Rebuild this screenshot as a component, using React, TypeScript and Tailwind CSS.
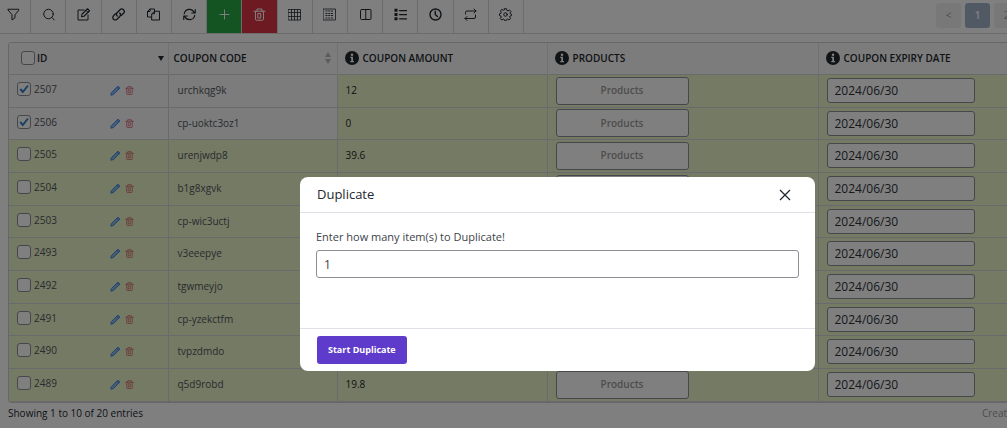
import React from "react";

type Coupon = { id: number; code: string; amount: string; selected?: boolean };

const coupons: Coupon[] = [
  { id: 2507, code: "urchkqg9k", amount: "12", selected: true },
  { id: 2506, code: "cp-uoktc3oz1", amount: "0", selected: true },
  { id: 2505, code: "urenjwdp8", amount: "39.6" },
  { id: 2504, code: "b1g8xgvk", amount: "" },
  { id: 2503, code: "cp-wic3uctj", amount: "" },
  { id: 2493, code: "v3eeepye", amount: "" },
  { id: 2492, code: "tgwmeyjo", amount: "" },
  { id: 2491, code: "cp-yzekctfm", amount: "" },
  { id: 2490, code: "tvpzdmdo", amount: "" },
  { id: 2489, code: "q5d9robd", amount: "19.8" },
];

function Glyph({ children, size = "size-[13px]" }: { children: React.ReactNode; size?: string }) {
  return (
    <svg
      viewBox="0 0 26 26"
      className={`${size} shrink-0`}
      fill="none"
      stroke="currentColor"
      strokeWidth="2"
      strokeLinejoin="round"
      strokeLinecap="round"
      aria-hidden="true"
    >
      {children}
    </svg>
  );
}

const trashPaths = (
  <>
    <path d="M2 6.500h22M8 6V2h10v4M5 7v15.500a2 2 0 0 0 2 2h12a2 2 0 0 0 2-2V7" />
    <path d="M10.500 11h5v9h-5z" />
  </>
);

const tools: { label: string; tone?: string; icon: React.ReactNode }[] = [
  { label: "Filter", icon: <path d="M2.500 2.500h21v2L16 13.500v6L10 24V13.500L2.500 4.500z" /> },
  {
    label: "Search",
    icon: (
      <>
        <circle cx="13" cy="12" r="9.500" />
        <path d="M20 19l4.500 5" />
      </>
    ),
  },
  {
    label: "Edit",
    icon: (
      <>
        <path d="M14 4H2v20h20V14" />
        <path d="M9 17.500l1-5L21 1.500l4 4L14 16.500z" strokeWidth="2.200" />
        <path d="M18 4.500l4 4" />
      </>
    ),
  },
  {
    label: "Link",
    icon: (
      <>
        <path d="M10.500 16a5 5 0 0 1 0-7l5.500-5.500a4.900 4.900 0 0 1 7 7l-4 4" strokeWidth="2.500" />
        <path d="M15.500 10a5 5 0 0 1 0 7L10 22.500a4.900 4.900 0 0 1-7-7l4-4" strokeWidth="2.500" />
      </>
    ),
  },
  {
    label: "Duplicate",
    icon: (
      <>
        <path d="M9 18H1V7l5-5h9v4" />
        <path d="M6 2v5H1" />
        <path d="M10 11.500L15 6.500h10V24H10z" />
        <path d="M15 6.500v5h-5" />
      </>
    ),
  },
  {
    label: "Refresh",
    icon: (
      <>
        <path d="M2.500 11.500A10.500 10.500 0 0 1 22.500 9M24.500 3v7h-7" strokeWidth="2.300" />
        <path d="M23.500 14.500A10.500 10.500 0 0 1 3.500 17M1.500 23v-7h7" strokeWidth="2.300" />
      </>
    ),
  },
  { label: "Add", tone: "bg-[#28a745] text-white", icon: <path d="M13 4v18M4 13h18" /> },
  { label: "Delete", tone: "bg-[#dc3545] text-white", icon: trashPaths },
  {
    label: "Table",
    icon: (
      <path
        strokeLinejoin="miter"
        strokeWidth="1.600"
        d="M1 3h24v21H1zM1 9h24M1 17h24M7 3v21M13 3v21M19 3v21"
      />
    ),
  },
  {
    label: "Rows",
    icon: (
      <>
        <path strokeLinejoin="miter" strokeWidth="1.600" d="M1 2h24v22H1z" />
        <path
          d="M5 6h16M5 11h16M5 15h16M5 20h16"
          strokeWidth="1.800"
          strokeDasharray="4 1.500"
          strokeLinecap="butt"
        />
      </>
    ),
  },
  {
    label: "Columns",
    icon: (
      <>
        <rect x="3" y="3" width="21" height="20" rx="2" />
        <path d="M13.500 3v20" />
      </>
    ),
  },
  {
    label: "List",
    icon: (
      <>
        <path d="M1 1.500h6v6H1zM1 10h6v6H1zM1 18.500h6v6H1z" fill="currentColor" stroke="none" />
        <path d="M11 5h14M11 13h14M11 21.500h14" strokeWidth="2.500" />
      </>
    ),
  },
  {
    label: "History",
    icon: (
      <>
        <circle cx="13" cy="13" r="11" strokeWidth="2.800" />
        <path d="M12.500 6.500V13l4.500 4" strokeWidth="2.800" />
      </>
    ),
  },
  {
    label: "Repeat",
    icon: (
      <>
        <path d="M3 12V9a3 3 0 0 1 3-3h18M20 2l4 4-4 4" />
        <path d="M23 14v4a3 3 0 0 1-3 3H2M6 17l-4 4 4 4" />
      </>
    ),
  },
  {
    label: "Settings",
    icon: (
      <>
        <path d="M11 1.500h4l.8 3.300 2.200 1 3-1.800 2.900 2.900-1.800 3 1 2.200 2.400.8v1.300l-.1 1-3.100.7-1 2.200 1.800 3-2.900 2.900-3-1.800-2.200 1-.8 2.300h-2.500l-.9-2.300-2.200-1-3 1.800L2.700 21l1.800-3-1-2.200-2.500-.8v-3.500l2.500-.7 1-2.200-1.800-3L5.600 2.800l3 1.800 1.700-.800z" />
        <circle cx="13" cy="13" r="3.500" />
      </>
    ),
  },
];

function Tick({ label, checked = false }: { label: string; checked?: boolean }) {
  return (
    <span className="grid size-[14px] shrink-0 place-items-center">
      <input
        type="checkbox"
        aria-label={label}
        defaultChecked={checked}
        className="peer col-start-1 row-start-1 size-[14px] appearance-none rounded-[3px] border border-[#8c8f94] bg-white"
      />
      <svg
        viewBox="0 0 12 12"
        className="pointer-events-none invisible col-start-1 row-start-1 size-3 peer-checked:visible"
        fill="none"
        stroke="#3582c4"
        strokeWidth="2"
        aria-hidden="true"
      >
        <path d="M2.200 6l2.600 3L10 2.500" />
      </svg>
    </span>
  );
}

function Info() {
  return (
    <svg viewBox="0 0 28 28" className="size-[14px] shrink-0" aria-hidden="true">
      <circle cx="14" cy="14" r="14" fill="#23282d" />
      <circle cx="14" cy="7.500" r="2.500" fill="#fff" />
      <path d="M10.500 11.500H16V20h2v2.500h-7.500V20h2v-6h-2z" fill="#fff" />
    </svg>
  );
}

function CouponRow({ coupon }: { coupon: Coupon }) {
  const lead = coupon.selected ? "bg-[#f8f8f8]" : "";
  return (
    <tr className="h-[33px] border-b border-[#d3d4d8] bg-[#eaf4c8] [&:nth-child(3n+2)]:h-8">
      <td className={`border-r border-[#d3d4d8] pl-2 ${lead}`}>
        <div className="flex items-center">
          <label className="flex items-center gap-[3px] pb-[3px] leading-4">
            <Tick label={`Select ${coupon.id}`} checked={coupon.selected} />
            {coupon.id}
          </label>
          <div className="mr-[34px] ml-auto flex items-center gap-1">
            <button type="button" aria-label={`Edit ${coupon.id}`} className="text-[#2f80ed]">
              <svg viewBox="0 0 20 20" className="size-[11px]" fill="none" stroke="currentColor" strokeWidth="1.600" aria-hidden="true">
                <path d="M1.500 18.500l1-4.500L14.500 2l3.500 3.500L6 17.500z" fill="currentColor" fillOpacity=".5" />
                <path d="M12.500 4L16 7.500" />
              </svg>
            </button>
            <button type="button" aria-label={`Delete ${coupon.id}`} className="text-[#d0565f]">
              <Glyph size="size-[9px]">{trashPaths}</Glyph>
            </button>
          </div>
        </div>
      </td>
      <td className={`border-r border-[#d3d4d8] pl-[9px] ${lead}`}>{coupon.code}</td>
      <td className="border-r border-[#d3d4d8] pl-2 text-[#23282d]">{coupon.amount}</td>
      <td className="border-r border-[#d3d4d8] pl-2">
        <button
          type="button"
          className="block h-7 w-[133px] rounded-[3px] border border-[#8c8f94] bg-white text-[10px] font-semibold text-[#9a9a9a]"
        >
          Products
        </button>
      </td>
      <td className="pl-2">
        <input
          type="text"
          aria-label={`Coupon expiry date ${coupon.id}`}
          defaultValue="2024/06/30"
          className="block h-[25px] w-[148px] rounded-[3px] border border-[#8c8f94] bg-white px-[7px] text-xs text-[#2c3338]"
        />
      </td>
    </tr>
  );
}

export default function App() {
  return (
    <div className="relative overflow-hidden bg-white font-['Open_Sans','Noto_Sans',sans-serif] text-[10px] text-[#50575e]">
      <header className="flex h-[34px] items-start overflow-hidden border-b border-[#d8d8d8]">
        <nav aria-label="Table tools" className="-ml-1 flex w-[528px] shrink-0">
          {tools.map((tool) => (
            <button
              key={tool.label}
              type="button"
              aria-label={tool.label}
              className={`flex h-[33px] flex-1 items-center justify-center border-r border-[#d8d8d8] pb-1 ${tool.tone ?? "text-[#23282d]"}`}
            >
              <Glyph>{tool.icon}</Glyph>
            </button>
          ))}
        </nav>
        <nav aria-label="Pages" className="-mr-3 ml-auto flex shrink-0 gap-1 pt-[3px] text-[10px] text-[#9a9a9a]">
          <button type="button" className="size-[25px] rounded-[3px] bg-[#f0f1f3]">&lt;</button>
          <button type="button" className="size-[25px] rounded-[3px] bg-[#a2b4c8] font-semibold text-white">1</button>
          <button type="button" className="size-[25px] rounded-[3px] bg-[#f0f1f3]">2</button>
        </nav>
      </header>

      <main className="pt-2 pl-2">
        <div className="overflow-hidden rounded-l-[4px] border border-r-0 border-[#cfcfd2]">
          <table className="w-full table-fixed border-collapse text-left">
            <colgroup>
              <col className="w-[159px]" />
              <col className="w-[169px]" />
              <col className="w-[210px]" />
              <col className="w-[271px]" />
              <col />
            </colgroup>
            <thead>
              <tr className="h-[31px] border-b border-[#d3d4d8] bg-[#f8f8f8] text-[10px] text-[#23282d]">
                <th className="border-r border-[#e2e2e4] pl-3 font-semibold">
                  <div className="flex items-center gap-0.5 pr-1">
                    <Tick label="Select all" />
                    ID
                    <svg viewBox="0 0 6 5" className="ml-auto h-[5px] w-[6px]" fill="#23282d" aria-hidden="true">
                      <path d="M0 0h6L3 5z" />
                    </svg>
                  </div>
                </th>
                <th className="border-r border-[#e2e2e4] pl-[5px] font-semibold">
                  <div className="flex items-center pr-[6px]">
                    COUPON CODE
                    <svg viewBox="0 0 6 12" className="ml-auto h-3 w-[6px]" fill="#b8b8b8" aria-hidden="true">
                      <path d="M0 5h6L3 0zM0 7h6L3 12z" />
                    </svg>
                  </div>
                </th>
                <th className="border-r border-[#e2e2e4] pl-[7px] font-semibold">
                  <div className="flex items-center gap-1"><Info />COUPON AMOUNT</div>
                </th>
                <th className="border-r border-[#e2e2e4] pl-[7px] font-semibold">
                  <div className="flex items-center gap-1"><Info />PRODUCTS</div>
                </th>
                <th className="pl-[7px] font-semibold">
                  <div className="flex items-center gap-1"><Info />COUPON EXPIRY DATE</div>
                </th>
              </tr>
            </thead>
            <tbody>
              {coupons.map((coupon) => (
                <CouponRow key={coupon.id} coupon={coupon} />
              ))}
            </tbody>
          </table>
        </div>
      </main>

      <footer className="flex h-[26px] items-center justify-between border-b border-[#d0d0d0] pb-1 pl-2 text-[#23282d]">
        <p>Showing 1 to 10 of 20 entries</p>
        <p className="text-[#9a9a9a]">Creat</p>
      </footer>

      <div className="absolute inset-0 bg-black/50 pt-[177px] pl-[300px]">
        <form
          role="dialog"
          aria-labelledby="dialog-title"
          onSubmit={(event) => event.preventDefault()}
          className="w-[515px] rounded-lg bg-white text-[#3c434a]"
        >
          <div className="flex h-9 items-center justify-between border-b border-[#dee2e6] pr-6 pl-[17px]">
            <h2 id="dialog-title" className="text-[13px] font-medium text-[#23282d]">Duplicate</h2>
            <button type="button" aria-label="Close" className="text-[#23282d]">
              <svg viewBox="0 0 12 12" className="size-3" fill="none" stroke="currentColor" strokeWidth="1.300" aria-hidden="true">
                <path d="M1 1l10 10M11 1L1 11" />
              </svg>
            </button>
          </div>
          <div className="px-4 pt-4 pb-[50px]">
            <label htmlFor="copies" className="block pb-[5px] text-[11px] leading-4">
              Enter how many item(s) to Duplicate!
            </label>
            <input
              id="copies"
              type="text"
              defaultValue="1"
              className="block h-7 w-full rounded-[3px] border border-[#8c8f94] bg-white px-[7px] text-xs"
            />
          </div>
          <div className="border-t border-[#dee2e6] px-[17px] py-[7px]">
            <button type="submit" className="h-7 rounded-[3px] bg-[#5e3bcb] px-[11px] text-[9px] font-bold text-white">
              Start Duplicate
            </button>
          </div>
        </form>
      </div>
    </div>
  );
}
